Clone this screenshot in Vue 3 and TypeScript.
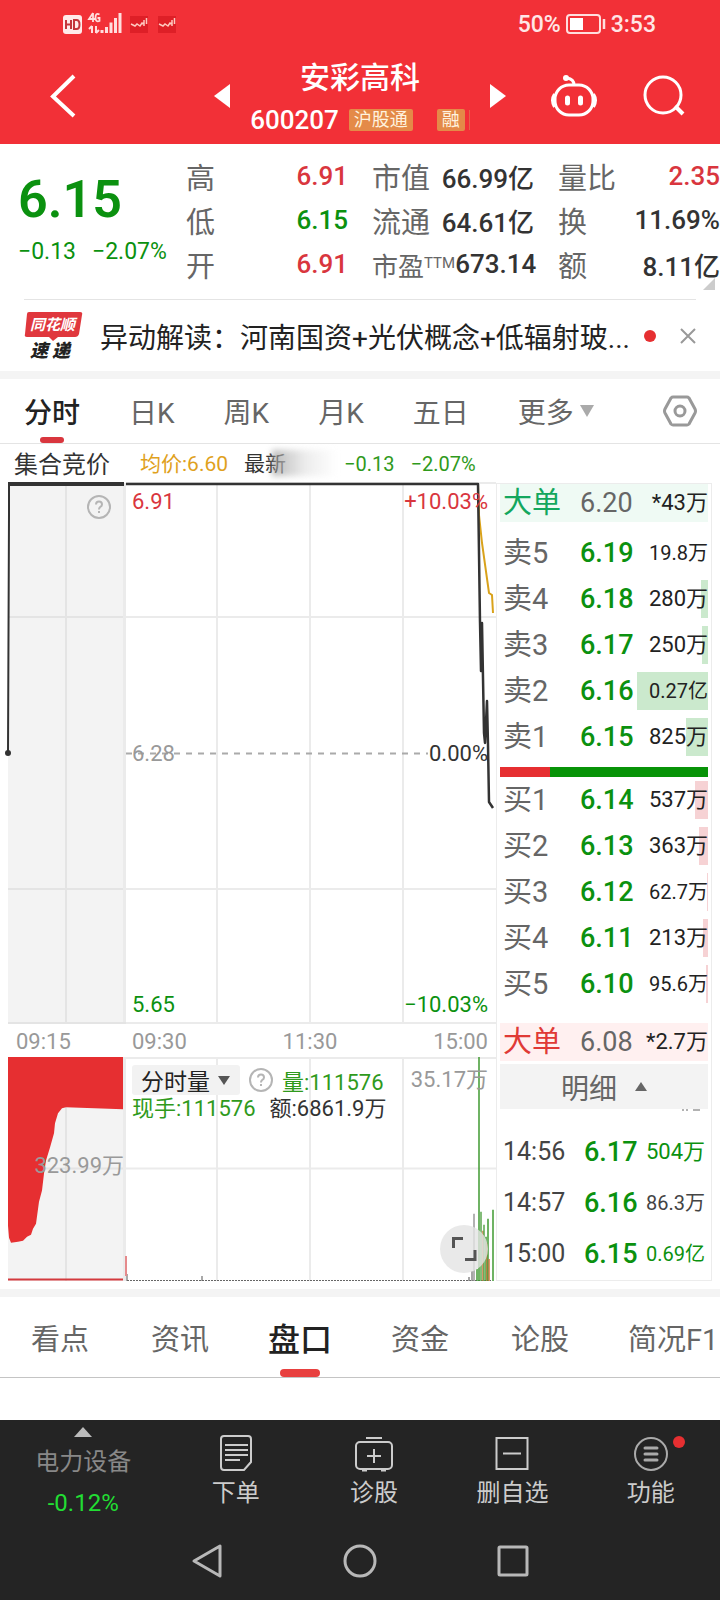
<script setup lang="ts">
interface Stat { label: string; sup?: string; value: string; tone: 'up' | 'down' | 'ink' }
interface Level { label: string; price: string; volume: string; depth: number }
interface Trade { time: string; price: string; volume: string; tone: 'down' | 'muted' }

const statColumns: Stat[][] = [
  [
    { label: '高', value: '6.91', tone: 'up' },
    { label: '低', value: '6.15', tone: 'down' },
    { label: '开', value: '6.91', tone: 'up' },
  ],
  [
    { label: '市值', value: '66.99亿', tone: 'ink' },
    { label: '流通', value: '64.61亿', tone: 'ink' },
    { label: '市盈', sup: 'TTM', value: '673.14', tone: 'ink' },
  ],
  [
    { label: '量比', value: '2.35', tone: 'up' },
    { label: '换', value: '11.69%', tone: 'ink' },
    { label: '额', value: '8.11亿', tone: 'ink' },
  ],
]

const periods = ['分时', '日K', '周K', '月K', '五日']
const sections = ['看点', '资讯', '盘口', '资金', '论股', '简况F1']

const asks: Level[] = [
  { label: '卖5', price: '6.19', volume: '19.8万', depth: 0 },
  { label: '卖4', price: '6.18', volume: '280万', depth: 10 },
  { label: '卖3', price: '6.17', volume: '250万', depth: 8 },
  { label: '卖2', price: '6.16', volume: '0.27亿', depth: 98 },
  { label: '卖1', price: '6.15', volume: '825万', depth: 30 },
]
const bids: Level[] = [
  { label: '买1', price: '6.14', volume: '537万', depth: 18 },
  { label: '买2', price: '6.13', volume: '363万', depth: 13 },
  { label: '买3', price: '6.12', volume: '62.7万', depth: 1 },
  { label: '买4', price: '6.11', volume: '213万', depth: 7 },
  { label: '买5', price: '6.10', volume: '95.6万', depth: 3 },
]
const trades: Trade[] = [
  { time: '14:56', price: '6.17', volume: '504万', tone: 'down' },
  { time: '14:57', price: '6.16', volume: '86.3万', tone: 'muted' },
  { time: '15:00', price: '6.15', volume: '0.69亿', tone: 'down' },
]

const volumeBars = [
  { x: 343, h: 4, c: '#888' },
  { x: 346, h: 10, c: '#888' },
  { x: 348, h: 67, c: '#999' },
  { x: 351, h: 12, c: '#3f9a30' },
  { x: 353, h: 223, c: '#3f9a30' },
  { x: 355, h: 69, c: '#5aa64c' },
  { x: 357, h: 50, c: '#c9763c' },
  { x: 358, h: 56, c: '#5aa64c' },
  { x: 360, h: 44, c: '#3f9a30' },
  { x: 361, h: 38, c: '#c9763c' },
  { x: 362, h: 62, c: '#3f9a30' },
  { x: 363, h: 22, c: '#c9763c' },
  { x: 367, h: 71, c: '#3f9a30' },
]
</script>

<template>
  <div class="app">
    <header class="top">
      <div class="status">
        <div class="status-side">
          <svg width="120" height="24" viewBox="0 0 120 24" aria-hidden="true">
            <rect x="1" y="3" width="19" height="19" rx="3" fill="#ffeaea" />
            <path d="M4 8v9M9 8v9M4 12.500h5M12 8v9h2.500q3 0 3-4.500t-3-4.500z" fill="none" stroke="#c4353c" stroke-width="2" />
            <path d="M31 1l-4 6h6M31 1v9M37.500 2.500q-4-2-4 3t4 3.500v-3h-2" fill="none" stroke="#ffdede" stroke-width="1.800" />
            <path d="M30 14v7M27 17l3-3M34 14v7M34 21l3-3" fill="none" stroke="#ffdede" stroke-width="2" />
            <path d="M40 18v3M44.500 15v6M49 10.500v10.500M53.500 6v15M58 1v20" stroke="#ffdede" stroke-width="3" />
            <path d="M68 4h18v17h-18zM96 4h18v17h-18z" fill="#de1f27" />
            <path d="M69 12l4 2 2-2 3 2 2-3 2 1M82 8v6M84.500 6v6M97 12l4 2 2-2 3 2 2-3 2 1M110 8v6M112.500 6v6" fill="none" stroke="#ffc9c0" stroke-width="1.500" />
          </svg>
        </div>
        <div class="status-side right">
          <span>50%</span>
          <svg width="42" height="22" viewBox="0 0 42 22" aria-hidden="true">
            <rect x="2" y="2" width="33" height="18" rx="3" fill="none" stroke="#ffdede" stroke-width="2" />
            <rect x="5" y="5" width="13" height="12" fill="#fff" />
            <path d="M39 6v10" stroke="#ffdede" stroke-width="2.500" />
          </svg>
          <span>3:53</span>
        </div>
      </div>
      <div class="titlebar">
        <button class="back" aria-label="返回">
          <svg width="28" height="46" viewBox="0 0 28 46"><path d="M25 3L4 23.500 25 43" fill="none" stroke="#fff" stroke-width="4" /></svg>
        </button>
        <button class="step" aria-label="上一只"><svg width="16" height="24" viewBox="0 0 16 24"><path d="M0 12L16 0v24z" fill="#fff" /></svg></button>
        <div class="name">
          <h1>安彩高科</h1>
          <p><span class="code">600207</span><span class="tag">沪股通</span><span class="tag gap">融</span><i class="edge"></i></p>
        </div>
        <button class="step" aria-label="下一只"><svg width="16" height="24" viewBox="0 0 16 24"><path d="M16 12L0 0v24z" fill="#fff" /></svg></button>
        <div class="tools">
          <button aria-label="助手">
            <svg width="48" height="44" viewBox="0 0 48 44" fill="none" stroke="#fff" stroke-width="3">
              <rect x="5" y="11" width="38" height="30" rx="14" />
              <path d="M24 11q0-6-7-7" />
              <circle cx="16" cy="4" r="3" fill="#fff" stroke="none" />
              <path d="M4.500 20q-4 6 0 13M43.500 20q4 6 0 13" />
              <path d="M17.500 24v5M30.500 24v5" stroke-width="5" stroke-linecap="round" />
            </svg>
          </button>
          <button aria-label="搜索">
            <svg width="42" height="42" viewBox="0 0 42 42" fill="none" stroke="#fff" stroke-width="3"><circle cx="20" cy="20" r="18" /><path d="M32 31l8 8" stroke-width="4" /></svg>
          </button>
        </div>
      </div>
    </header>

    <section class="quote">
      <div class="last">
        <strong>6.15</strong>
        <p><span>−0.13</span><span>−2.07%</span></p>
      </div>
      <dl v-for="(col, i) in statColumns" :key="i">
        <div v-for="s in col" :key="s.label">
          <dt :class="{ small: s.sup }">{{ s.label }}<sup v-if="s.sup">{{ s.sup }}</sup></dt>
          <dd :class="s.tone">{{ s.value }}</dd>
        </div>
      </dl>
      <i class="corner"></i>
    </section>

    <section class="news">
      <svg class="brand" width="60" height="50" viewBox="0 0 60 50" role="img" aria-label="同花顺速递">
        <path d="M5 1h51q3 0 2 3l-3 19q-1 3-4 3H34l-5 4-4-4H3q-3 0-2-3L3 3q0-2 2-2z" fill="#e0373d" />
        <text x="6" y="19" class="brand-a">同花顺</text>
        <text x="6" y="46" class="brand-b">速 递</text>
      </svg>
      <a href="#news">异动解读：河南国资+光伏概念+低辐射玻...</a>
      <i class="dot"></i>
      <button aria-label="关闭"><svg width="16" height="16" viewBox="0 0 16 16"><path d="M1 1l14 14M15 1L1 15" stroke="#999" stroke-width="2" /></svg></button>
    </section>

    <nav class="periods">
      <button v-for="(p, i) in periods" :key="p" :class="{ on: i === 0 }">{{ p }}</button>
      <button class="more">更多<svg width="14" height="12" viewBox="0 0 14 12"><path d="M0 0h14L7 12z" fill="#aaa" /></svg></button>
      <button class="gear" aria-label="设置">
        <svg width="34" height="32" viewBox="0 0 34 32" fill="none" stroke="#999" stroke-width="3"><path d="M10 2h14q1 0 2 1l6 11q1 2 0 4l-6 11q-1 1-2 1H10q-1 0-2-1L2 18q-1-2 0-4L8 3q1-1 2-1z" /><circle cx="17" cy="16" r="5" /></svg>
      </button>
    </nav>

    <section class="board">
      <div class="legend-a">集合竞价</div>
      <div class="legend-b">
        <span class="avg">均价:6.60</span>
        <span class="latest">最新<i class="smear"></i></span>
        <span class="chg">−0.13</span>
        <span class="chg">−2.07%</span>
      </div>

      <div class="pane auction">
        <svg viewBox="0 0 118 541" preserveAspectRatio="none" aria-hidden="true">
          <path d="M0 0h115v541H0z" fill="#f3f3f3" />
          <path d="M115 0h3v541h-3z" fill="#ebebeb" />
          <path d="M58 0v541M0 134h115M0 406h115" stroke="#e4e4e4" stroke-width="2" />
          <path d="M0 540h118" stroke="#e4e4e4" stroke-width="2" />
          <path d="M1 1v30L0 270" fill="none" stroke="#333" stroke-width="2" />
          <path d="M0 1h116" stroke="#333" stroke-width="4" />
          <circle cx="0" cy="270" r="3" fill="#333" />
        </svg>
        <button class="help" aria-label="说明"><svg width="24" height="24" viewBox="0 0 24 24" fill="none" stroke="#b5b5b5" stroke-width="2"><circle cx="12" cy="12" r="11" /><path d="M9 9.500q0-3 3-3t3 3q0 1.500-2 2.700-1 .8-1 2.300M12 16v2" /></svg></button>
      </div>

      <div class="pane price">
        <svg viewBox="0 0 370 541" preserveAspectRatio="none" aria-hidden="true">
          <path d="M91 0v541M184 0v541M277 0v541M0 134h370M0 406h370M0 540h370M0 0h370" stroke="#ebebeb" stroke-width="2" />
          <path d="M0 270.500h302" stroke="#aaa" stroke-width="2" stroke-dasharray="6 6" />
          <path d="M352 2l1 30 3 28 7 50 3 2 1 18" fill="none" stroke="#d9a21b" stroke-width="2" />
          <path d="M0 1h352L354 139 355 188 356 140 358 250 359 260 361 218 362 262 363 319 367 325" fill="none" stroke="#333" stroke-width="2.500" stroke-linejoin="round" />
        </svg>
        <div class="marks">
          <p><span class="up">6.91</span><span class="up">+10.03%</span></p>
          <p><span class="base">6.28</span><span class="ink">0.00%</span></p>
          <p><span class="down">5.65</span><span class="down">−10.03%</span></p>
        </div>
      </div>

      <div class="axis-a">09:15</div>
      <div class="axis-b"><span>09:30</span><span>11:30</span><span>15:00</span></div>

      <div class="pane vol-a">
        <svg viewBox="0 0 118 223" preserveAspectRatio="none" aria-hidden="true">
          <path d="M0 0h115v223H0z" fill="#f3f3f3" />
          <path d="M115 0h3v223h-3z" fill="#ebebeb" />
          <path d="M58 0v223M0 111h115" stroke="#e4e4e4" stroke-width="2" />
          <path d="M0 0h115v52L58 50 54 51 50 56 47 66 46 76 42 90 38 103 36 116 34 133 31 144 28 166 25 171 23 177 19 179 15 183 10 184 3 185 1 180 0 168z" fill="#e62f31" />
          <path d="M0 221.500h115" stroke="#d33a3e" stroke-width="2" />
        </svg>
        <span class="vol-mark">323.99万</span>
      </div>

      <div class="pane vol-b">
        <svg viewBox="0 0 370 223" preserveAspectRatio="none" aria-hidden="true">
          <path d="M91 0v223M184 0v223M277 0v223M0 111h370M0 1h370" stroke="#ebebeb" stroke-width="2" />
          <path d="M1 223v-7M76 223v-5" stroke="#555" />
          <path d="M0 198v20" stroke="#e58a8c" stroke-width="2" />
          <path d="M1 222.500h364" stroke="#666" stroke-dasharray="2 1" />
          <path v-for="b in volumeBars" :key="b.x" :d="`M${b.x} 223v-${b.h}`" :stroke="b.c" stroke-width="1.500" />
        </svg>
        <div class="vol-info">
          <div class="vol-row">
            <button class="pick">分时量<svg width="12" height="9" viewBox="0 0 12 9"><path d="M0 0h12L6 9z" fill="#555" /></svg></button>
            <svg width="24" height="24" viewBox="0 0 24 24" fill="none" stroke="#b5b5b5" stroke-width="2"><circle cx="12" cy="12" r="11" /><path d="M9 9.500q0-3 3-3t3 3q0 1.500-2 2.700-1 .8-1 2.300M12 16v2" /></svg>
            <span class="chg">量:111576</span>
            <span class="cap">35.17万</span>
          </div>
          <div class="vol-line"><span class="chg">现手:111576</span><span>额:6861.9万</span></div>
        </div>
        <button class="expand" aria-label="全屏"><svg width="26" height="26" viewBox="0 0 26 26" fill="none" stroke="#555" stroke-width="3"><path d="M2.500 12V2.500H12M24 14v9.500H14" /></svg></button>
      </div>

      <aside class="book">
        <table>
          <tbody>
            <tr class="big sell"><th>大单</th><td class="p">6.20</td><td class="v">*43万</td></tr>
            <tr class="space"><td colspan="3"></td></tr>
            <tr v-for="l in asks" :key="l.label" class="ask">
              <th>{{ l.label }}</th><td class="p">{{ l.price }}</td>
              <td class="v" :class="{ sm: l.volume.length > 4 }"><i class="depth" :style="{ width: l.depth + '%' }"></i><span>{{ l.volume }}</span></td>
            </tr>
            <tr class="ratio"><td colspan="3"><div></div></td></tr>
            <tr v-for="l in bids" :key="l.label" class="bid">
              <th>{{ l.label }}</th><td class="p">{{ l.price }}</td>
              <td class="v" :class="{ sm: l.volume.length > 4 }"><i class="depth" :style="{ width: l.depth + '%' }"></i><span>{{ l.volume }}</span></td>
            </tr>
            <tr class="space wide"><td colspan="3"></td></tr>
            <tr class="big buy"><th>大单</th><td class="p">6.08</td><td class="v">*2.7万</td></tr>
          </tbody>
        </table>
        <button class="detail">明细<svg width="12" height="9" viewBox="0 0 12 9"><path d="M0 9h12L6 0z" fill="#666" /></svg></button>
        <svg class="scrolled" width="18" height="2" viewBox="0 0 18 2" aria-hidden="true"><path d="M0 1h2M4 1h2M11 1h7" stroke="#666" /></svg>
        <table class="trades">
          <tbody>
            <tr v-for="t in trades" :key="t.time">
              <th>{{ t.time }}</th><td class="p">{{ t.price }}</td>
              <td class="v" :class="[t.tone, { sm: t.volume.length > 4 }]">{{ t.volume }}</td>
            </tr>
          </tbody>
        </table>
      </aside>
    </section>

    <nav class="sections">
      <button v-for="(s, i) in sections" :key="s" :class="{ on: i === 2 }">{{ s }}</button>
    </nav>

    <footer class="bottom">
      <div class="actions">
        <button class="index">
          <svg width="18" height="10" viewBox="0 0 18 10"><path d="M0 10h18L9 0z" fill="#bbb" /></svg>
          <span>电力设备</span>
          <b>-0.12%</b>
        </button>
        <button>
          <svg width="36" height="38" viewBox="0 0 36 38" fill="none" stroke="#ccc" stroke-width="2"><path d="M6 2h24q3 0 3 3v23l-7 8H6q-3 0-3-3V5q0-3 3-3zM7 11h23M7 16h23M7 21h23M7 26h15" /></svg>
          <span>下单</span>
        </button>
        <button>
          <svg width="40" height="38" viewBox="0 0 40 38" fill="none" stroke="#ccc" stroke-width="2"><rect x="2" y="8" width="36" height="27" rx="4" /><path d="M12 4h16M20 15v14M13 22h14" /><path d="M8 36h5M27 36h5" stroke-width="3" /></svg>
          <span>诊股</span>
        </button>
        <button>
          <svg width="36" height="38" viewBox="0 0 36 38" fill="none" stroke="#ccc" stroke-width="2"><rect x="2.500" y="4" width="31" height="31" /><path d="M9 19.500h18" /></svg>
          <span>删自选</span>
        </button>
        <button class="fn">
          <svg width="36" height="38" viewBox="0 0 36 38" fill="none" stroke="#aaa" stroke-width="2"><circle cx="18" cy="20" r="16" /><path d="M12 14h12M12 20h12M12 26h12" stroke-width="3" stroke-linecap="round" /></svg>
          <span>功能</span>
        </button>
      </div>
      <div class="system">
        <button aria-label="后退"><svg width="34" height="36" viewBox="0 0 34 36" fill="none" stroke="#b8b8b8" stroke-width="3" stroke-linejoin="round"><path d="M30 3v30L4 18z" /></svg></button>
        <button aria-label="主页"><svg width="36" height="36" viewBox="0 0 36 36" fill="none" stroke="#b8b8b8" stroke-width="3"><circle cx="18" cy="18" r="15" /></svg></button>
        <button aria-label="最近任务"><svg width="34" height="36" viewBox="0 0 34 36" fill="none" stroke="#b8b8b8" stroke-width="3"><rect x="3" y="4" width="28" height="28" rx="1" /></svg></button>
      </div>
    </footer>
  </div>
</template>

<style>
body { margin: 0; background: #fff; }
</style>

<style scoped>
.app { font-family: Roboto, "Noto Sans CJK SC", sans-serif; color: #333; background: #fff; overflow: hidden; }
button { border: 0; padding: 0; margin: 0; background: none; font: inherit; color: inherit; white-space: nowrap; }
svg { display: block; flex: none; }
p, h1, dl, dd { margin: 0; }
.up { color: #d9363e; }
.down { color: #0b910f; }
.ink { color: #333; }
.chg { color: #2f9a1c; }

.top { background: #f23037; color: #fff; }
.status { display: flex; justify-content: space-between; height: 48px; padding: 0 64px 0 62px; }
.status-side { display: flex; align-items: center; font-size: 23px; font-weight: 500; color: #ffe6e6; }
.status-side.right { gap: 4px; }
.titlebar { display: grid; grid-template-columns: 1fr 16px 260px 16px 1fr; align-items: center; height: 96px; }
.back { justify-self: start; margin-left: 49px; }
.name { text-align: center; padding-top: 4px; }
.name h1 { font-size: 30px; line-height: 44px; font-weight: 500; }
.name p { display: flex; align-items: center; justify-content: center; height: 40px; }
.code { font-size: 26px; font-weight: 500; margin-right: 10px; }
.tag { background: #e48a48; color: #fff3df; font-size: 18px; line-height: 22px; padding: 0 5px; border-radius: 2px; }
.tag.gap { margin-left: 24px; }
.edge { width: 1px; height: 20px; margin-left: 4px; background: #e4634a; }
.tools { display: flex; justify-content: flex-end; gap: 45px; padding-right: 35px; }

.quote { position: relative; display: grid; grid-template-columns: 144fr 162fr 162fr 162fr; column-gap: 24px; padding: 10px 0 14px 18px; }
.quote > * { min-width: 0; }
.quote::after { content: ""; position: absolute; left: 24px; right: 24px; bottom: 0; height: 1px; background: #e4e4e4; }
.last { white-space: nowrap; color: #0b910f; }
.last strong { display: block; font-size: 52px; line-height: 76px; padding-top: 8px; font-weight: 600; }
.last p { display: flex; gap: 16px; font-size: 23px; line-height: 28px; }
.quote dl > div { display: flex; justify-content: space-between; align-items: center; height: 44px; white-space: nowrap; }
.quote dt { font-size: 29px; color: #666; }
.quote dt.small { font-size: 26px; }
.quote sup { font-size: 15px; line-height: 0; vertical-align: 8px; }
.quote dd { font-size: 26px; font-weight: 500; }
.corner { position: absolute; right: 5px; bottom: 10px; border-left: 12px solid transparent; border-bottom: 12px solid #ccc; }

.news { display: flex; align-items: center; height: 71px; padding: 0 24px; border-bottom: 8px solid #f4f4f4; }
.news a { flex: 1; min-width: 0; margin-left: 16px; font-size: 28px; color: #222; text-decoration: none; white-space: nowrap; overflow: hidden; }
.brand-a { font: italic 700 15px "Noto Sans CJK SC", sans-serif; fill: #fff; }
.brand-b { font: italic 900 18px "Noto Sans CJK SC", sans-serif; fill: #222; }
.dot { width: 12px; height: 12px; border-radius: 50%; background: #e62f31; margin-right: 24px; }

.periods { display: flex; align-items: center; gap: 49px; height: 64px; padding: 0 23px 0 24px; border-bottom: 1px solid #e4e4e4; font-size: 28px; color: #666; }
.periods button { position: relative; height: 64px; }
.periods .on { color: #222; font-weight: 500; }
.periods .on::after { content: ""; position: absolute; left: 50%; bottom: 0; width: 24px; height: 6px; margin-left: -12px; border-radius: 3px; background: #d9363e; }
.more { display: flex; align-items: center; gap: 6px; }
.periods .gear { margin-left: auto; }

.board { display: grid; grid-template-columns: 118fr 370fr 216fr; grid-template-rows: 39px 541px 33px 224px; padding: 0 8px 8px; border-bottom: 8px solid #f4f4f4; }
.legend-a { font-size: 24px; line-height: 42px; padding-left: 6px; }
.legend-b { display: flex; font-size: 21px; line-height: 40px; padding-left: 14px; white-space: nowrap; grid-column: 2 / 4; }
.avg { color: #e0a11d; margin-right: 16px; }
.latest { position: relative; margin-right: 58px; }
.smear { position: absolute; left: 28px; top: 6px; width: 66px; height: 26px; background: linear-gradient(90deg, rgba(140, 140, 140, .6), rgba(235, 235, 235, .9) 50%, rgba(255, 255, 255, 0)); filter: blur(3px); }
.legend-b .chg { margin-right: 16px; font-size: 20px; }
.pane { position: relative; min-width: 0; }
.pane > svg { width: 100%; height: 100%; overflow: visible; }
.auction, .axis-a, .vol-a { grid-column: 1; }
.price, .axis-b, .vol-b { grid-column: 2; }
.help { position: absolute; right: 15px; top: 12px; }
.marks { position: absolute; inset: 2px 8px 2px 6px; display: flex; flex-direction: column; justify-content: space-between; font-size: 22px; line-height: 34px; }
.marks p { display: flex; justify-content: space-between; }
.base { color: #999; }
.axis-a, .axis-b { font-size: 22px; line-height: 36px; color: #999; }
.axis-a { padding-left: 8px; }
.axis-b { display: flex; justify-content: space-between; padding: 0 8px 0 6px; }
.vol-mark { position: absolute; right: 2px; top: 93px; font-size: 22px; line-height: 32px; color: #999; }
.vol-info { position: absolute; inset: 7px 8px auto 6px; font-size: 22px; white-space: nowrap; }
.vol-row { display: flex; align-items: center; gap: 9px; height: 32px; }
.pick { display: flex; align-items: center; gap: 8px; height: 30px; padding: 0 10px 0 9px; border-radius: 3px; background: #f2f2f2; color: #222; font-size: 23px; }
.cap { margin-left: auto; margin-bottom: 6px; color: #999; }
.vol-line { display: flex; gap: 14px; line-height: 26px; }
.expand { position: absolute; right: 8px; bottom: 8px; display: grid; place-items: center; width: 48px; height: 48px; border-radius: 50%; background: rgba(228, 228, 228, .8); }

.book { grid-column: 3; grid-row: 2 / 5; border: 1px solid #ececec; padding: 0 3px; min-width: 0; }
.book table { width: 100%; table-layout: fixed; border-collapse: collapse; }
.book th, .book td { padding: 0; height: 46px; line-height: 38px; white-space: nowrap; }
.book th { width: 80px; padding-left: 3px; text-align: left; font-weight: 400; font-size: 29px; color: #666; box-sizing: border-box; }
.book .p { width: 56px; font-size: 27px; font-weight: 500; color: #0b910f; }
.book .v { position: relative; text-align: right; font-size: 22px; color: #222; }
.book .v.sm { font-size: 20px; }
.book .v span { position: relative; }
.depth { position: absolute; right: 0; top: 4px; bottom: 4px; }
.ask .depth { background: #cbe9cd; }
.bid .depth { background: #f6d2d4; }
.book .big th, .book .big td { height: 38px; }
.book .big .p { color: #666; font-weight: 400; }
.sell { background: #effaf4; }
.buy { background: #fff0f0; }
.book .buy th { color: #e03a36; }
.book .sell th { color: #13a75e; }
.book .space td { height: 8px; line-height: 8px; }
.book .wide td { height: 16px; }
.book .ratio td { height: 17px; line-height: 10px; vertical-align: bottom; }
.ratio div { height: 10px; background: linear-gradient(90deg, #e62f31 24%, #079307 24%); }
.detail { display: flex; align-items: center; justify-content: center; gap: 18px; width: 100%; height: 45px; margin-top: 3px; background: #f3f3f3; font-size: 28px; color: #666; }
.scrolled { margin: 0 8px 0 auto; }
.trades { margin-top: 15px; }
.book .trades th, .book .trades td { height: 51px; }
.book .trades th { width: 84px; font-size: 25px; color: #444; }
.book .trades .down { color: #0b910f; }
.book .trades .muted { color: #444; }
.book .trades .v { padding-right: 3px; }

.sections { display: grid; grid-template-columns: repeat(6, minmax(0, 1fr)); height: 80px; border-bottom: 1px solid #c4c4c4; font-size: 29px; color: #666; }
.sections button { position: relative; }
.sections button:last-child { text-align: left; padding-left: 28px; }
.sections .on { font-size: 32px; font-weight: 500; color: #222; }
.sections .on::after { content: ""; position: absolute; left: 50%; bottom: 0; width: 40px; height: 8px; margin-left: -20px; border-radius: 4px; background: #e8403f; }

.bottom { margin-top: 42px; background: #242424; color: #ccc; }
.actions { display: grid; grid-template-columns: 166fr repeat(4, 138fr); height: 102px; }
.actions button { position: relative; display: flex; flex-direction: column; align-items: center; padding-top: 14px; font-size: 24px; }
.actions span { line-height: 42px; }
.actions .index { padding-top: 7px; color: #888; }
.index span { margin-top: 4px; }
.index b { font-weight: 400; color: #22dd33; line-height: 40px; }
.fn::after { content: ""; position: absolute; top: 16px; left: 50%; margin-left: 22px; width: 12px; height: 12px; border-radius: 50%; background: #e62f31; }
.system { display: flex; align-items: center; justify-content: center; gap: 118px; height: 78px; }
</style>
